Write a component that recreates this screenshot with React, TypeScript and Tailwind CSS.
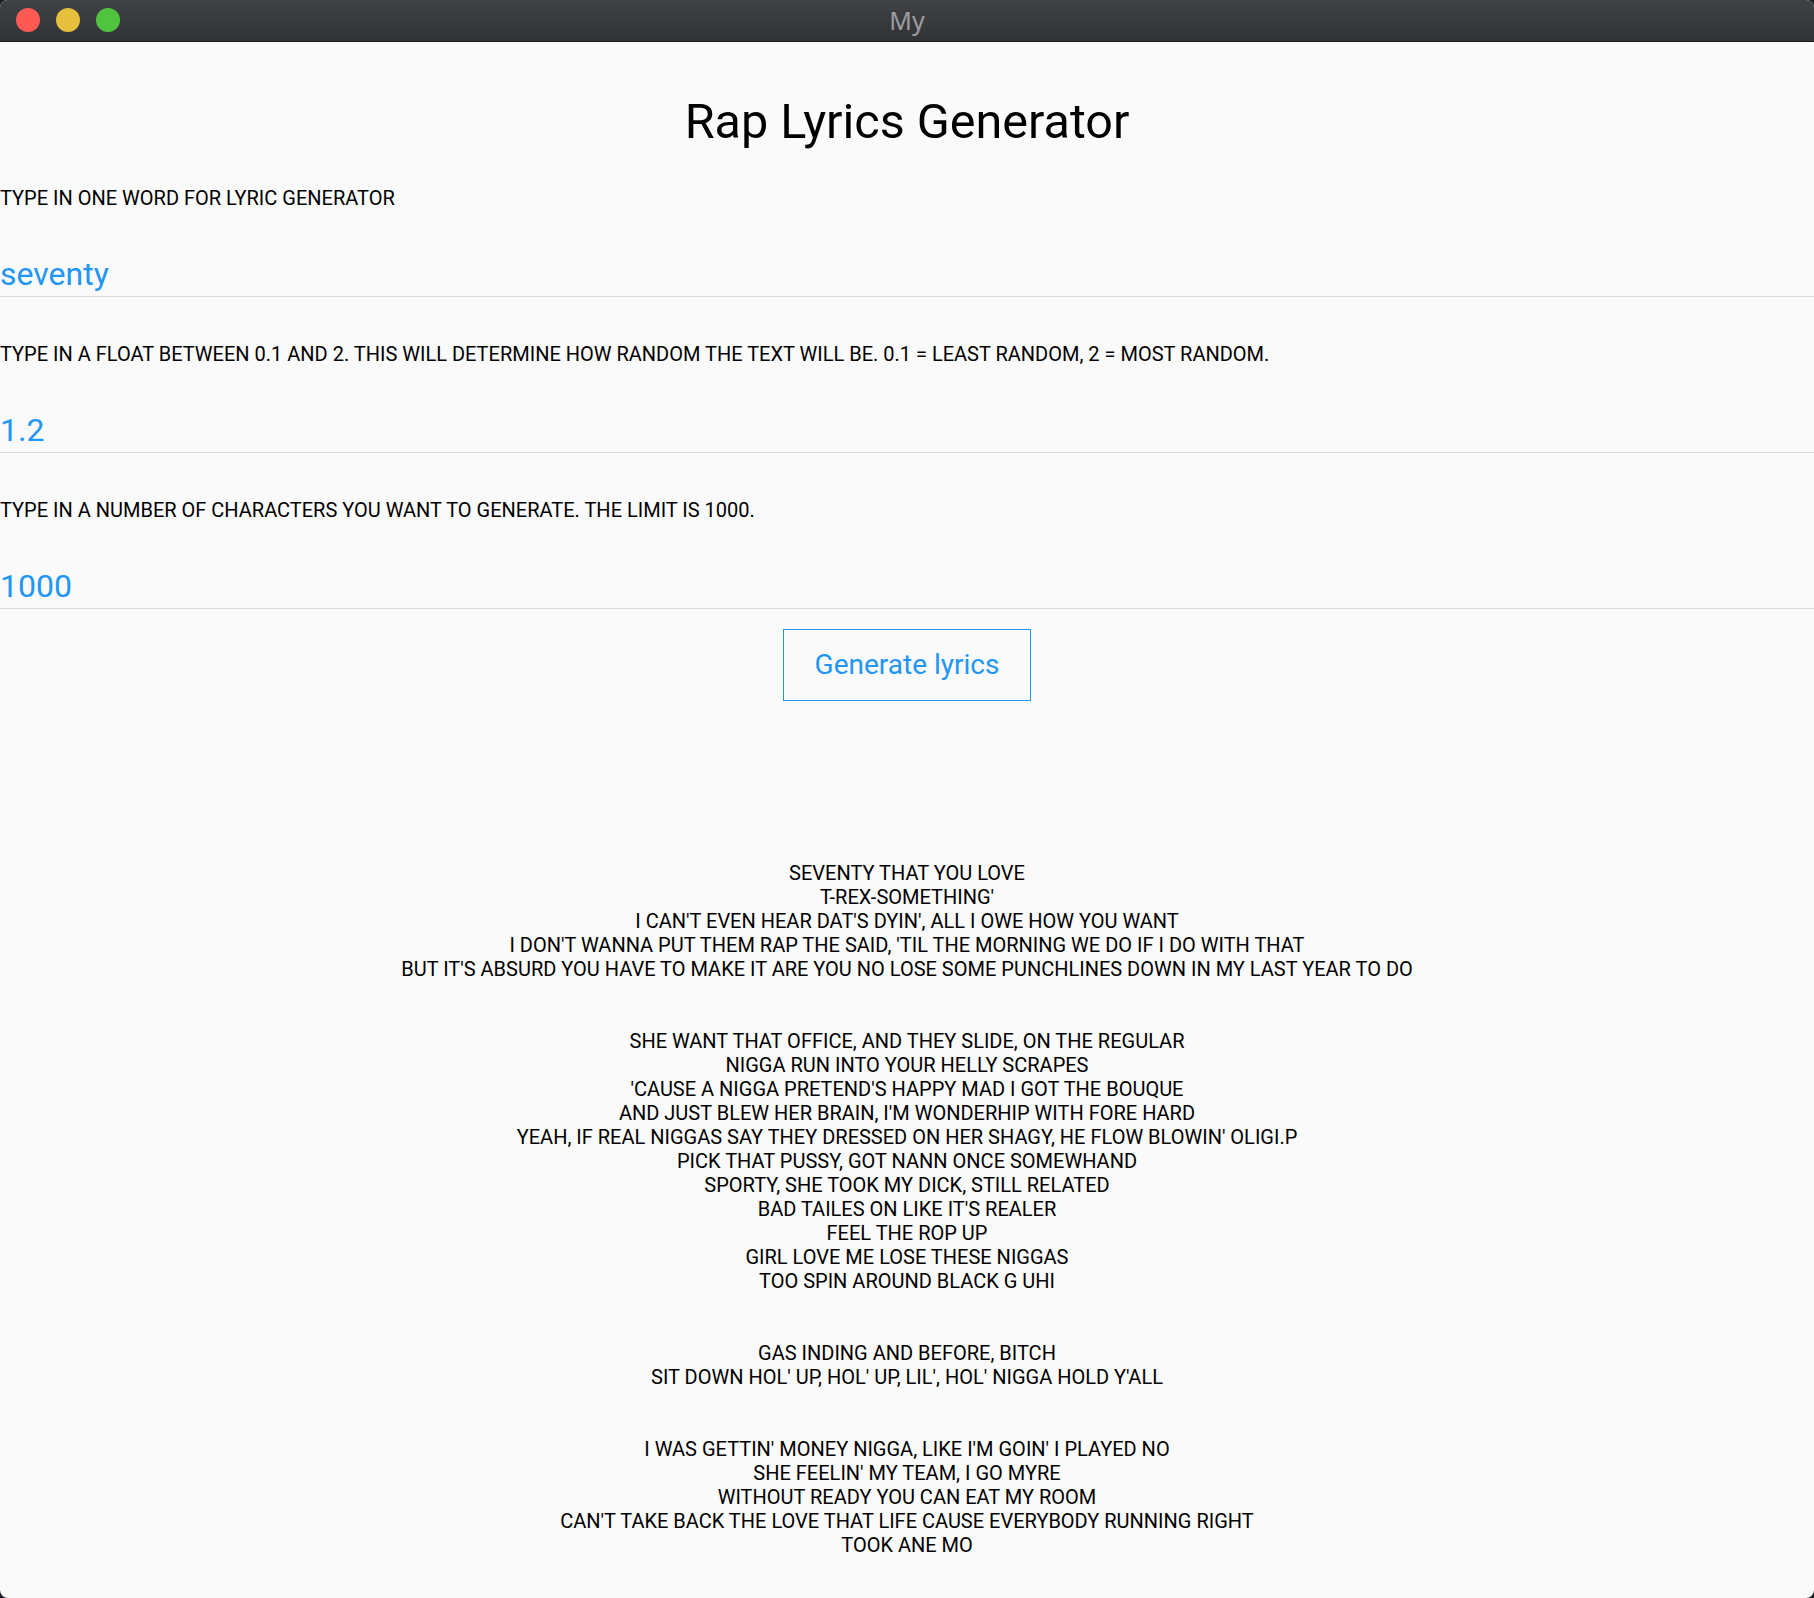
import React from "react";

const lyrics = `SEVENTY THAT YOU LOVE
T-REX-SOMETHING'
I CAN'T EVEN HEAR DAT'S DYIN', ALL I OWE HOW YOU WANT
I DON'T WANNA PUT THEM RAP THE SAID, 'TIL THE MORNING WE DO IF I DO WITH THAT
BUT IT'S ABSURD YOU HAVE TO MAKE IT ARE YOU NO LOSE SOME PUNCHLINES DOWN IN MY LAST YEAR TO DO


SHE WANT THAT OFFICE, AND THEY SLIDE, ON THE REGULAR
NIGGA RUN INTO YOUR HELLY SCRAPES
'CAUSE A NIGGA PRETEND'S HAPPY MAD I GOT THE BOUQUE
AND JUST BLEW HER BRAIN, I'M WONDERHIP WITH FORE HARD
YEAH, IF REAL NIGGAS SAY THEY DRESSED ON HER SHAGY, HE FLOW BLOWIN' OLIGI.P
PICK THAT PUSSY, GOT NANN ONCE SOMEWHAND
SPORTY, SHE TOOK MY DICK, STILL RELATED
BAD TAILES ON LIKE IT'S REALER
FEEL THE ROP UP
GIRL LOVE ME LOSE THESE NIGGAS
TOO SPIN AROUND BLACK G UHI


GAS INDING AND BEFORE, BITCH
SIT DOWN HOL' UP, HOL' UP, LIL', HOL' NIGGA HOLD Y'ALL


I WAS GETTIN' MONEY NIGGA, LIKE I'M GOIN' I PLAYED NO
SHE FEELIN' MY TEAM, I GO MYRE
WITHOUT READY YOU CAN EAT MY ROOM
CAN'T TAKE BACK THE LOVE THAT LIFE CAUSE EVERYBODY RUNNING RIGHT
TOOK ANE MO`;

function Field({ label, value, first }: { label: string; value: string; first?: boolean }) {
  return (
    <div>
      <div className={`${first ? "mt-[40px]" : "mt-[45px]"} text-[20px] leading-[24px] text-black uppercase`}>
        {label}
      </div>
      <div className="mt-[44px] pb-[2px] border-b border-[#dcdcdc]">
        <div className="text-[32px] leading-[40px] text-[#2196f3]">{value}</div>
      </div>
    </div>
  );
}

export default function App() {
  return (
    <div className="w-[1814px] h-[1598px] bg-[#1b1d26]" style={{ fontFamily: "Roboto, 'Noto Sans', sans-serif" }}>
      <div className="w-full h-full rounded-[8px] overflow-hidden bg-[#fafafa] flex flex-col">
        <div className="relative h-[42px] shrink-0 bg-gradient-to-b from-[#404145] to-[#323337] border-b border-[#1a1a1c] flex items-center justify-center">
          <div className="absolute left-[16px] top-[8px] flex gap-[16px]">
            <div className="w-[24px] h-[24px] rounded-full bg-[#fe5a52]" />
            <div className="w-[24px] h-[24px] rounded-full bg-[#e6bf3c]" />
            <div className="w-[24px] h-[24px] rounded-full bg-[#4fc53f]" />
          </div>
          <span className="text-[25px] text-[#9d9da1]" style={{ fontFamily: "'Noto Sans', sans-serif" }}>My</span>
        </div>
        <div className="flex-1">
          <h1 className="mt-[56px] text-center text-[48.5px] leading-[48px] text-black">Rap Lyrics Generator</h1>
          <Field first label="TYPE IN ONE WORD FOR LYRIC GENERATOR" value="seventy" />
          <Field label="TYPE IN A FLOAT BETWEEN 0.1 AND 2. THIS WILL DETERMINE HOW RANDOM THE TEXT WILL BE. 0.1 = LEAST RANDOM, 2 = MOST RANDOM." value="1.2" />
          <Field label="TYPE IN A NUMBER OF CHARACTERS YOU WANT TO GENERATE. THE LIMIT IS 1000." value="1000" />
          <div className="flex justify-center mt-[20px]">
            <button className="w-[248px] h-[72px] border border-[#2196f3] text-[#2196f3] text-[28px] leading-[32px] bg-transparent">
              Generate lyrics
            </button>
          </div>
          <div className="mt-[160px] text-center text-[20px] leading-[24px] text-black whitespace-pre-line">
            {lyrics}
          </div>
        </div>
      </div>
    </div>
  );
}
